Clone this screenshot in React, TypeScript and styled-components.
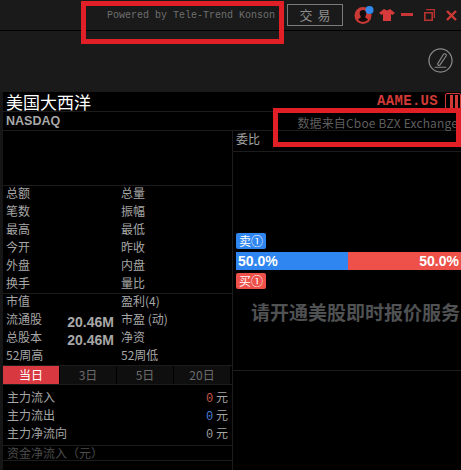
import React from "react";
import styled, { createGlobalStyle } from "styled-components";

const CJK = `"Noto Sans CJK SC", "Liberation Sans", sans-serif`;

const GlobalStyle = createGlobalStyle`
  html, body {
    margin: 0;
    padding: 0;
    background: #000;
  }
  body {
    font-family: ${CJK};
    width: 461px;
    height: 470px;
    overflow: hidden;
  }
`;

const statRows = [
  ["总额", "总量"],
  ["笔数", "振幅"],
  ["最高", "最低"],
  ["今开", "昨收"],
  ["外盘", "内盘"],
  ["换手", "量比"],
];

const capRows = [
  { a: "市值", v: "", b: "盈利(4)" },
  { a: "流通股", v: "20.46M", b: "市盈 (动)" },
  { a: "总股本", v: "20.46M", b: "净资" },
  { a: "52周高", v: "", b: "52周低" },
];

const flowRows = [
  { label: "主力流入", color: "#c9544c" },
  { label: "主力流出", color: "#4a7fd6" },
  { label: "主力净流向", color: "#9a9a9a" },
];

const tabs = ["当日", "3日", "5日", "20日"];

export default function App() {
  return (
    <Page>
      <GlobalStyle />
      <TopBar>
        <Powered>Powered by Tele-Trend Konson</Powered>
        <TradeButton>交 易</TradeButton>
        <WindowIcons>
          <LogoIcon />
          <ShirtIcon />
          <MinIcon />
          <RestoreIcon />
          <CloseIcon />
        </WindowIcons>
      </TopBar>
      <ToolBar>
        <PencilIcon />
      </ToolBar>
      <Quote>
        <TitleRow>
          <Name>美国大西洋</Name>
          <Ticker>AAME.US</Ticker>
          <PauseBox>
            <i />
            <i />
          </PauseBox>
        </TitleRow>
        <MarketRow>
          <Market>NASDAQ</Market>
          <Source>数据来自Cboe BZX Exchange</Source>
        </MarketRow>
        <Columns>
          <LeftColumn>
            <EmptyChart />
            <StatGroup $rows={statRows.length}>
              {statRows.map(([a, b]) => (
                <StatRow key={a}>
                  <span>{a}</span>
                  <span>{b}</span>
                </StatRow>
              ))}
            </StatGroup>
            <StatGroup $rows={capRows.length}>
              {capRows.map((r) => (
                <StatRow key={r.a}>
                  <span>{r.a}</span>
                  <span>{r.b}</span>
                  {r.v && <StatValue>{r.v}</StatValue>}
                </StatRow>
              ))}
            </StatGroup>
            <Tabs>
              {tabs.map((t, i) => (
                <Tab key={t} $active={i === 0}>
                  {t}
                </Tab>
              ))}
            </Tabs>
            <FlowGroup>
              {flowRows.map((r) => (
                <FlowRow key={r.label}>
                  <span>{r.label}</span>
                  <FlowAmount>
                    <FlowZero $color={r.color}>0</FlowZero> 元
                  </FlowAmount>
                </FlowRow>
              ))}
            </FlowGroup>
            <NetInflow>资金净流入（元）</NetInflow>
          </LeftColumn>
          <RightColumn>
            <RatioRow>委比</RatioRow>
            <BookArea>
              <Badge $color="#2f86f0">卖①</Badge>
              <Bar>
                <BarPart $color="#2f86f0">50.0%</BarPart>
                <BarPart $color="#ee504a" $right>
                  50.0%
                </BarPart>
              </Bar>
              <Badge $color="#ee504a">买①</Badge>
              <Upsell>请开通美股即时报价服务</Upsell>
            </BookArea>
          </RightColumn>
        </Columns>
      </Quote>
      <Annotation $variant="top" />
      <Annotation $variant="source" />
    </Page>
  );
}

const LogoIcon = () => (
  <svg width="20" height="18" viewBox="0 0 20 18">
    <circle cx="9" cy="9.500" r="8.500" fill="#c93a36" />
    <path
      d="M9 4 C11.300 4 12.600 5.600 12.300 7.800 C12.100 9.200 11.300 10 11.300 11 C11.300 12 13 12.600 14 13.400 C12.800 15 11 15.800 9 15.800 C7 15.800 5.200 15 4 13.400 C5 12.600 6.700 12 6.700 11 C6.700 10 5.900 9.200 5.700 7.800 C5.400 5.600 6.700 4 9 4 Z"
      fill="#140c0c"
    />
    <circle cx="15.500" cy="4" r="4" fill="#3388ee" />
  </svg>
);

const ShirtIcon = () => (
  <svg width="16" height="12" viewBox="0 0 16 12">
    <path d="M5 0 L8 1.500 L11 0 L16 4 L13.500 6 L12 5 L12 12 L4 12 L4 5 L2.500 6 L0 4 Z" fill="#d63a3a" />
  </svg>
);

const MinIcon = () => (
  <svg width="12" height="12" viewBox="0 0 12 12">
    <rect x="0" y="4" width="12" height="3" fill="#c83636" />
  </svg>
);

const RestoreIcon = () => (
  <svg width="11" height="12" viewBox="0 0 11 12">
    <path d="M2 0.500 H10.500 V9 M0.800 3.800 H8.200 V11.200 H0.800 Z" fill="none" stroke="#b8332f" strokeWidth="1.600" />
  </svg>
);

const CloseIcon = () => (
  <svg width="11" height="11" viewBox="0 0 11 11">
    <path d="M1 1 L10 10 M10 1 L1 10" stroke="#cf3a36" strokeWidth="2.400" />
  </svg>
);

const PencilIcon = () => (
  <svg width="25" height="25" viewBox="0 0 26 26" fill="none" stroke="#8a8a8a">
    <circle cx="13" cy="13" r="12" strokeWidth="1.300" />
    <path
      d="M17.500 6 C18.800 6 19.500 7.200 18.800 8.300 L12.500 17.500 C11.500 18.700 9.700 17.800 10.100 16.300 L15.800 7 C16.200 6.400 16.800 6 17.500 6 Z M7 20 H19"
      strokeWidth="1.200"
    />
  </svg>
);

const Page = styled.div`
  position: relative;
  width: 461px;
  height: 470px;
  background: #000;
  overflow: hidden;
`;

const TopBar = styled.div`
  height: 31px;
  box-sizing: border-box;
  background: #1a1a1a;
  border-bottom: 1px solid #000;
  display: flex;
  align-items: flex-start;
  padding-left: 107px;
`;

const Powered = styled.div`
  width: 180px;
  flex: none;
  margin-top: 10px;
  font-family: "Liberation Mono", monospace;
  font-size: 10px;
  line-height: 11px;
  color: #6f6f6f;
  white-space: nowrap;
`;

const TradeButton = styled.div`
  width: 56px;
  height: 22px;
  flex: none;
  margin-top: 4px;
  box-sizing: border-box;
  border: 1px solid #7a7a7a;
  color: #8e8e8e;
  font-size: 13px;
  word-spacing: 2px;
  line-height: 20px;
  text-align: center;
  white-space: pre;
`;

const WindowIcons = styled.div`
  display: flex;
  align-items: center;
  gap: 5px;
  margin-left: 11px;
  height: 24px;
  margin-top: 3px;
  & > svg:nth-child(3) { margin-left: 1px; }
  & > svg:nth-child(4),
  & > svg:nth-child(5) { margin-left: 6px; }
`;

const ToolBar = styled.div`
  height: 61px;
  box-sizing: border-box;
  background: #1a1a1a;
  display: flex;
  justify-content: flex-end;
  padding: 17px 8px 0 0;
`;

const Quote = styled.div`
  border-left: 3px solid #161616;
`;

const TitleRow = styled.div`
  height: 20px;
  box-sizing: border-box;
  display: flex;
  align-items: flex-start;
  border-bottom: 1px solid #1c1c1c;
  padding-left: 3px;
`;

const Name = styled.div`
  flex: 1;
  color: #fff;
  font-size: 17px;
  line-height: 19px;
  white-space: nowrap;
`;

const Ticker = styled.div`
  font-family: "Liberation Mono", monospace;
  font-weight: 700;
  font-size: 14px;
  line-height: 19px;
  color: #d23a36;
  margin-right: 7px;
  letter-spacing: 0.300px;
`;

const PauseBox = styled.div`
  width: 16px;
  height: 16px;
  margin-top: 1px;
  flex: none;
  box-sizing: border-box;
  border: 1px solid #d23a36;
  border-radius: 2px;
  display: flex;
  gap: 2px;
  padding: 1px 0 0 4px;
  i {
    display: block;
    width: 3px;
    height: 13px;
    background: #d23a36;
  }
`;

const MarketRow = styled.div`
  height: 19px;
  box-sizing: border-box;
  display: flex;
  align-items: center;
  justify-content: space-between;
  border-bottom: 1px solid #1c1c1c;
  padding: 0 3px 0 3px;
`;

const Market = styled.div`
  font-family: "Liberation Sans", sans-serif;
  font-weight: 700;
  font-size: 12.500px;
  color: #a8a8a8;
`;

const Source = styled.div`
  font-size: 12px;
  letter-spacing: 0.150px;
  color: #5e5e5e;
  margin-top: 3px;
  white-space: nowrap;
`;

const Columns = styled.div`
  display: flex;
`;

const LeftColumn = styled.div`
  width: 230px;
  flex: none;
  box-sizing: border-box;
  border-right: 1px solid #1c1c1c;
  height: 339px;
`;

const EmptyChart = styled.div`
  height: 55px;
  box-sizing: border-box;
  border-bottom: 1px solid #1c1c1c;
`;

const StatGroup = styled.div<{ $rows: number }>`
  height: ${(p) => p.$rows * 18}px;
  box-sizing: border-box;
  border-bottom: 1px solid #1c1c1c;
  padding-left: 3px;
`;

const StatRow = styled.div`
  position: relative;
  height: 18px;
  display: grid;
  grid-template-columns: 115px 1fr;
  font-size: 12px;
  line-height: 14px;
  color: #a6a6a6;
  white-space: nowrap;
`;

const StatValue = styled.b`
  position: absolute;
  right: 118px;
  top: 1px;
  font-family: "Liberation Sans", sans-serif;
  font-size: 14px;
  line-height: 18px;
  color: #a8a8a8;
`;

const Tabs = styled.div`
  display: grid;
  grid-template-columns: 57px 57px 57px 57px;
  height: 19px;
  box-sizing: border-box;
  border-bottom: 1px solid #1c1c1c;
`;

const Tab = styled.div<{ $active?: boolean }>`
  background: ${(p) => (p.$active ? "#d8383f" : "#0f0f0f")};
  color: ${(p) => (p.$active ? "#fff" : "#6c6c6c")};
  border-right: 1px solid #000;
  font-size: 12px;
  line-height: 18px;
  text-align: center;
`;

const FlowGroup = styled.div`
  height: 61px;
  box-sizing: border-box;
  padding: 3px 4px 0 4px;
  border-bottom: 1px solid #1c1c1c;
`;

const FlowRow = styled.div`
  height: 18px;
  display: flex;
  justify-content: space-between;
  font-size: 12px;
  line-height: 18px;
  color: #a6a6a6;
`;

const FlowAmount = styled.span`
  white-space: pre;
`;

const FlowZero = styled.span<{ $color: string }>`
  color: ${(p) => p.$color};
  font-family: "Liberation Mono", monospace;
`;

const NetInflow = styled.div`
  height: 15px;
  box-sizing: border-box;
  padding-left: 4px;
  border-bottom: 1px solid #1c1c1c;
  font-size: 12px;
  line-height: 14px;
  color: #4c4c4c;
`;

const RightColumn = styled.div`
  flex: 1;
  min-width: 0;
`;

const RatioRow = styled.div`
  height: 21px;
  box-sizing: border-box;
  border-bottom: 1px solid #1c1c1c;
  padding-left: 3px;
  font-size: 12px;
  line-height: 16px;
  color: #a6a6a6;
`;

const BookArea = styled.div`
  height: 219px;
  box-sizing: border-box;
  border-bottom: 1px solid #1c1c1c;
  padding: 81px 0 0 3px;
`;

const Badge = styled.div<{ $color: string }>`
  width: 30px;
  height: 16px;
  background: ${(p) => p.$color};
  border-radius: 2px;
  color: #fff;
  font-size: 12px;
  line-height: 16px;
  text-align: center;
  white-space: nowrap;
`;

const Bar = styled.div`
  display: grid;
  grid-template-columns: 112px 1fr;
  height: 18px;
  margin: 3px 0;
`;

const BarPart = styled.div<{ $color: string; $right?: boolean }>`
  background: ${(p) => p.$color};
  color: #fff;
  font-family: "Liberation Sans", sans-serif;
  font-weight: 700;
  font-size: 14px;
  line-height: 18px;
  padding: 0 2px;
  text-align: ${(p) => (p.$right ? "right" : "left")};
`;

const Upsell = styled.div`
  margin-top: 12px;
  padding-left: 15px;
  font-size: 19px;
  line-height: 22px;
  font-weight: 700;
  color: #4f5152;
  white-space: nowrap;
`;

const Annotation = styled.div<{ $variant: "top" | "source" }>`
  position: absolute;
  box-sizing: border-box;
  border: 5px solid #e01f26;
  left: ${(p) => (p.$variant === "top" ? "81px" : "273px")};
  top: ${(p) => (p.$variant === "top" ? "1px" : "108px")};
  width: ${(p) => (p.$variant === "top" ? "203px" : "188px")};
  height: ${(p) => (p.$variant === "top" ? "43px" : "39px")};
`;
